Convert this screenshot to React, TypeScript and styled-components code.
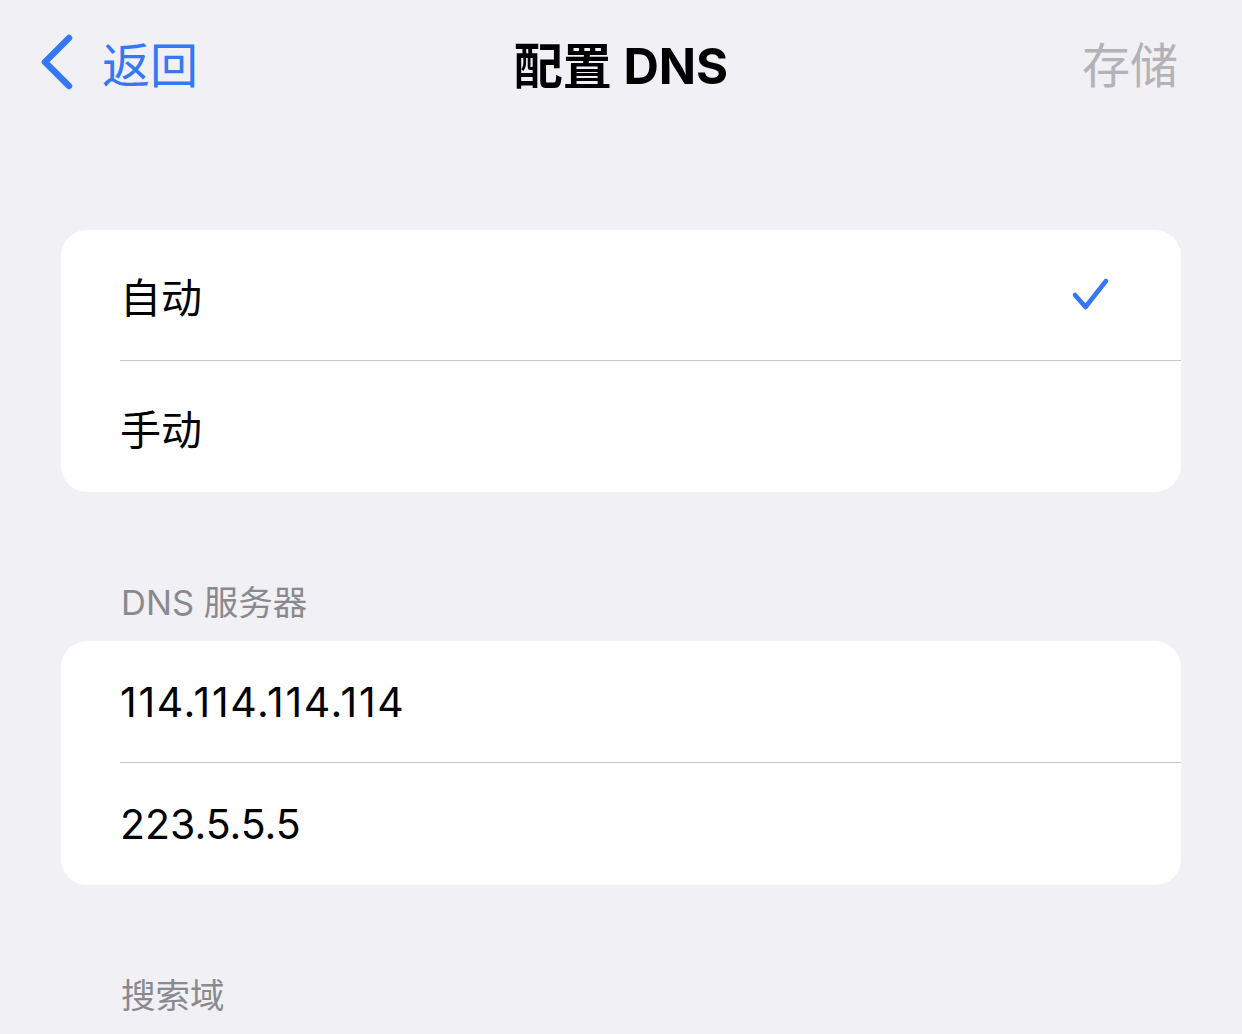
import React from "react";
import styled, { createGlobalStyle } from "styled-components";

const Global = createGlobalStyle`
  html, body { margin: 0; padding: 0; background: #f0f0f5; }
  body { font-family: Inter, "Noto Sans CJK SC", "Noto Sans", sans-serif; -webkit-font-smoothing: antialiased; }
`;

const Page = styled.div`
  width: 1242px;
  height: 1034px;
  overflow: hidden;
  background: #f0f0f5;
  display: flex;
  flex-direction: column;
`;

const NavBar = styled.div`
  height: 132px;
  padding: 0 40px;
  display: grid;
  grid-template-columns: 1fr auto 1fr;
  align-items: center;
`;

const BackButton = styled.div`
  display: flex;
  align-items: center;
  gap: 28px;
  color: #3478f6;
  font-size: 48px;
  font-family: "Noto Sans CJK SC", sans-serif;
  font-weight: 400;
`;

const Title = styled.div`
  font-size: 49px;
  font-weight: 700;
  color: #000;
  font-family: Inter, "Noto Sans CJK SC", sans-serif;
`;

const SaveButton = styled.div`
  justify-self: end;
  margin-right: 24px;
  font-size: 48px;
  color: #b3b3b7;
  font-family: "Noto Sans CJK SC", sans-serif;
`;

const Content = styled.div`
  display: flex;
  flex-direction: column;
  padding: 106px 61px 0 61px;
`;

const Card = styled.div`
  background: #fff;
  border-radius: 26px;
  overflow: hidden;
`;

const Row = styled.div<{ $h: number; $divider?: boolean }>`
  height: ${(p) => p.$h}px;
  margin-left: 59px;
  padding-right: 70px;
  display: flex;
  align-items: center;
  justify-content: space-between;
  box-sizing: border-box;
  border-bottom: ${(p) => (p.$divider ? "1px solid #c8c8cc" : "none")};
  font-size: 41px;
  color: #000;
`;

const RowLabel = styled.span<{ $tracking?: number }>`
  font-family: Inter, "Noto Sans CJK SC", sans-serif;
  letter-spacing: ${(p) => p.$tracking ?? 0}px;
`;

const SectionHeader = styled.div<{ $top: number }>`
  margin-top: ${(p) => p.$top}px;
  padding-left: 60px;
  height: 60px;
  display: flex;
  align-items: center;
  font-size: 34.5px;
  color: #8a8a8e;
  margin-bottom: 11px;
`;

const Check = () => (
  <svg width="40" height="40" viewBox="0 0 40 40">
    <path d="M4 20 L14.5 32 L35 6" fill="none" stroke="#3478f6" strokeWidth="4.6" strokeLinecap="round" strokeLinejoin="round" />
  </svg>
);

const Chevron = () => (
  <svg width="34" height="56" viewBox="0 0 34 56">
    <path d="M29 4 L5 28 L29 52" fill="none" stroke="#3478f6" strokeWidth="6.5" strokeLinecap="round" strokeLinejoin="round" />
  </svg>
);

export default function App() {
  return (
    <Page>
      <Global />
      <NavBar>
        <BackButton>
          <Chevron />
          <span>返回</span>
        </BackButton>
        <Title>配置 DNS</Title>
        <SaveButton>存储</SaveButton>
      </NavBar>
      <Content>
        <Card>
          <Row $h={131} $divider>
            <RowLabel>自动</RowLabel>
            <Check />
          </Row>
          <Row $h={131}>
            <RowLabel>手动</RowLabel>
          </Row>
        </Card>
        <SectionHeader $top={78}>DNS 服务器</SectionHeader>
        <Card>
          <Row $h={122} $divider>
            <RowLabel $tracking={1.7}>114.114.114.114</RowLabel>
          </Row>
          <Row $h={122}>
            <RowLabel>223.5.5.5</RowLabel>
          </Row>
        </Card>
        <SectionHeader $top={78}>搜索域</SectionHeader>
      </Content>
    </Page>
  );
}
